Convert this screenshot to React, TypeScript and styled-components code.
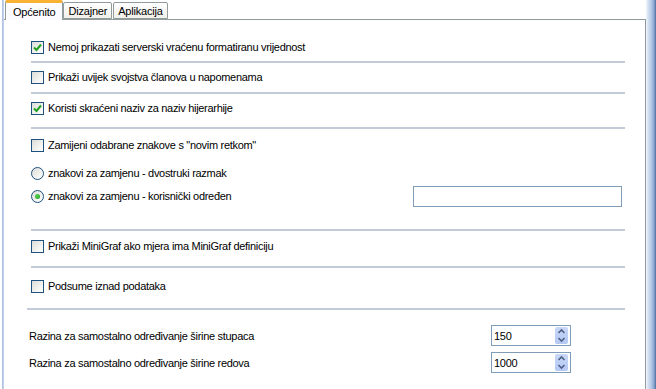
import React from 'react';
import styled, { createGlobalStyle } from 'styled-components';

const GlobalStyle = createGlobalStyle`
    html, body {
        margin: 0;
        padding: 0;
        background: #ffffff;
    }
    body {
        font-family: "Liberation Sans", Arial, sans-serif;
        font-size: 11px;
        letter-spacing: -0.3px;
        color: #000000;
    }
`;

const Window = styled.div`
    display: flex;
    width: 656px;
    height: 389px;
    overflow: hidden;
    background: #ffffff;
`;

const LeftEdge = styled.div`
    width: 2px;
    margin-left: 2px;
    background: linear-gradient(to right, #a9bde0, #c9d6ee);
    flex-shrink: 0;
`;

const RightEdge = styled.div`
    width: 10px;
    flex-shrink: 0;
    background: linear-gradient(to right, #f4f7fb 0px, #d6e2f3 2px, #b9cbe7 5px, #8aa5d0 8px, #4b6c9c 10px);
`;

const Main = styled.div`
    flex: 1;
    display: flex;
    flex-direction: column;
    min-width: 0;
`;

const TabStrip = styled.div`
    display: flex;
    align-items: flex-end;
    height: 19px;
    padding-left: 1px;
`;

const Tab = styled.div<{ $active?: boolean }>`
    box-sizing: border-box;
    height: ${p => (p.$active ? '20px' : '17px')};
    padding: 0 ${p => (p.$active ? '7px' : '4px')};
    display: flex;
    align-items: center;
    letter-spacing: -0.2px;
    border: 1px solid #919b9c;
    border-bottom: ${p => (p.$active ? 'none' : '1px solid #919b9c')};
    border-top: ${p => (p.$active ? '3px solid #f8b335' : '1px solid #919b9c')};
    border-radius: 2px 2px 0 0;
    background: ${p => (p.$active ? '#fcfcfe' : 'linear-gradient(#ffffff, #f1f0ea)')};
    margin-right: ${p => (p.$active ? '0' : '1px')};
    position: relative;
    z-index: ${p => (p.$active ? 1 : 0)};
    margin-bottom: ${p => (p.$active ? '-1px' : '0')};
`;

const Panel = styled.div`
    flex: 1;
    border-top: 1px solid #919b9c;
    border-right: 1px solid #919b9c;
    background: #ffffff;
    padding-left: 25px;
    padding-right: 20px;
    display: flex;
    flex-direction: column;
`;

const Row = styled.div<{ $mt: number; $h?: number }>`
    display: flex;
    align-items: center;
    height: ${p => p.$h ?? 20}px;
    margin-top: ${p => p.$mt}px;
`;

const Separator = styled.div<{ $mt: number; $ml?: number }>`
    height: 2px;
    margin-top: ${p => p.$mt}px;
    margin-left: ${p => p.$ml ?? 2}px;
    margin-right: 0;
    background: #c3cbd9;
`;

const Label = styled.span<{ $indent?: number }>`
    margin-left: ${p => p.$indent ?? 4}px;
    white-space: nowrap;
`;

const Box = styled.span`
    box-sizing: border-box;
    width: 13px;
    height: 13px;
    margin-left: 2px;
    border: 1px solid #1c5180;
    background: linear-gradient(135deg, #dcdcd7 0%, #f6f6f4 70%, #ffffff 100%);
    display: inline-flex;
    align-items: center;
    justify-content: center;
    flex-shrink: 0;
`;

const Round = styled.span`
    box-sizing: border-box;
    width: 13px;
    height: 13px;
    margin-left: 2px;
    border: 1px solid #1c5180;
    border-radius: 50%;
    background: linear-gradient(135deg, #dcdcd7 0%, #f6f6f4 70%, #ffffff 100%);
    display: inline-flex;
    align-items: center;
    justify-content: center;
    flex-shrink: 0;
`;

const Dot = styled.span`
    width: 5px;
    height: 5px;
    border-radius: 50%;
    background: radial-gradient(circle at 35% 35%, #55d051, #21a121);
`;

const TextInput = styled.div`
    box-sizing: border-box;
    margin-left: auto;
    margin-right: 3px;
    width: 209px;
    height: 21px;
    border: 1px solid #7f9db9;
    background: #ffffff;
`;

const Spin = styled.div`
    box-sizing: border-box;
    margin-left: auto;
    margin-right: 54px;
    width: 80px;
    height: 21px;
    border: 1px solid #7f9db9;
    background: #ffffff;
    display: flex;
    align-items: center;
    padding-left: 2px;
`;

const SpinValue = styled.span`
    flex: 1;
`;

const SpinButtons = styled.div`
    width: 13px;
    height: 17px;
    margin-right: 2px;
    display: flex;
    flex-direction: column;
    background: linear-gradient(#c8d7f8, #b4c8f4);
    border-radius: 2px;
`;

const Check = () => (
    <svg width="9" height="9" viewBox="0 0 9 9">
        <path d="M1 4.5 L3.5 7 L8 1.5" fill="none" stroke="#21a121" strokeWidth="2" />
    </svg>
);

const Arrows = () => (
    <svg width="13" height="17" viewBox="0 0 13 17">
        <path d="M3.5 6 L6.5 3 L9.5 6" fill="none" stroke="#4d6185" strokeWidth="1.6" />
        <path d="M3.5 11 L6.5 14 L9.5 11" fill="none" stroke="#4d6185" strokeWidth="1.6" />
    </svg>
);

const CheckBox = ({ checked, text, mt }: { checked?: boolean; text: string; mt: number }) => (
    <Row $mt={mt}>
        <Box>{checked && <Check />}</Box>
        <Label>{text}</Label>
    </Row>
);

export default function App() {
    return (
        <Window>
            <GlobalStyle />
            <LeftEdge />
            <Main>
                <TabStrip>
                    <Tab $active>Općenito</Tab>
                    <Tab>Dizajner</Tab>
                    <Tab>Aplikacija</Tab>
                </TabStrip>
                <Panel>
                    <CheckBox checked mt={17} text="Nemoj prikazati serverski vraćenu formatiranu vrijednost" />
                    <Separator $mt={4} />
                    <CheckBox mt={4} text="Prikaži uvijek svojstva članova u napomenama" />
                    <Separator $mt={5} />
                    <CheckBox checked mt={4} text="Koristi skraćeni naziv za naziv hijerarhije" />
                    <Separator $mt={9} />
                    <CheckBox mt={6} text={'Zamijeni odabrane znakove s "novim retkom"'} />
                    <Row $mt={8}>
                        <Round />
                        <Label>znakovi za zamjenu - dvostruki razmak</Label>
                    </Row>
                    <Row $mt={3}>
                        <Round><Dot /></Round>
                        <Label>znakovi za zamjenu - korisnički određen</Label>
                        <TextInput />
                    </Row>
                    <Separator $mt={23} />
                    <CheckBox mt={5} text="Prikaži MiniGraf ako mjera ima MiniGraf definiciju" />
                    <Separator $mt={10} />
                    <CheckBox mt={8} text="Podsume iznad podataka" />
                    <Separator $mt={12} $ml={-2} />
                    <Row $mt={15} $h={21}>
                        <Label $indent={0}>Razina za samostalno određivanje širine stupaca</Label>
                        <Spin>
                            <SpinValue>150</SpinValue>
                            <SpinButtons><Arrows /></SpinButtons>
                        </Spin>
                    </Row>
                    <Row $mt={6} $h={21}>
                        <Label $indent={0}>Razina za samostalno određivanje širine redova</Label>
                        <Spin>
                            <SpinValue>1000</SpinValue>
                            <SpinButtons><Arrows /></SpinButtons>
                        </Spin>
                    </Row>
                </Panel>
            </Main>
            <RightEdge />
        </Window>
    );
}
